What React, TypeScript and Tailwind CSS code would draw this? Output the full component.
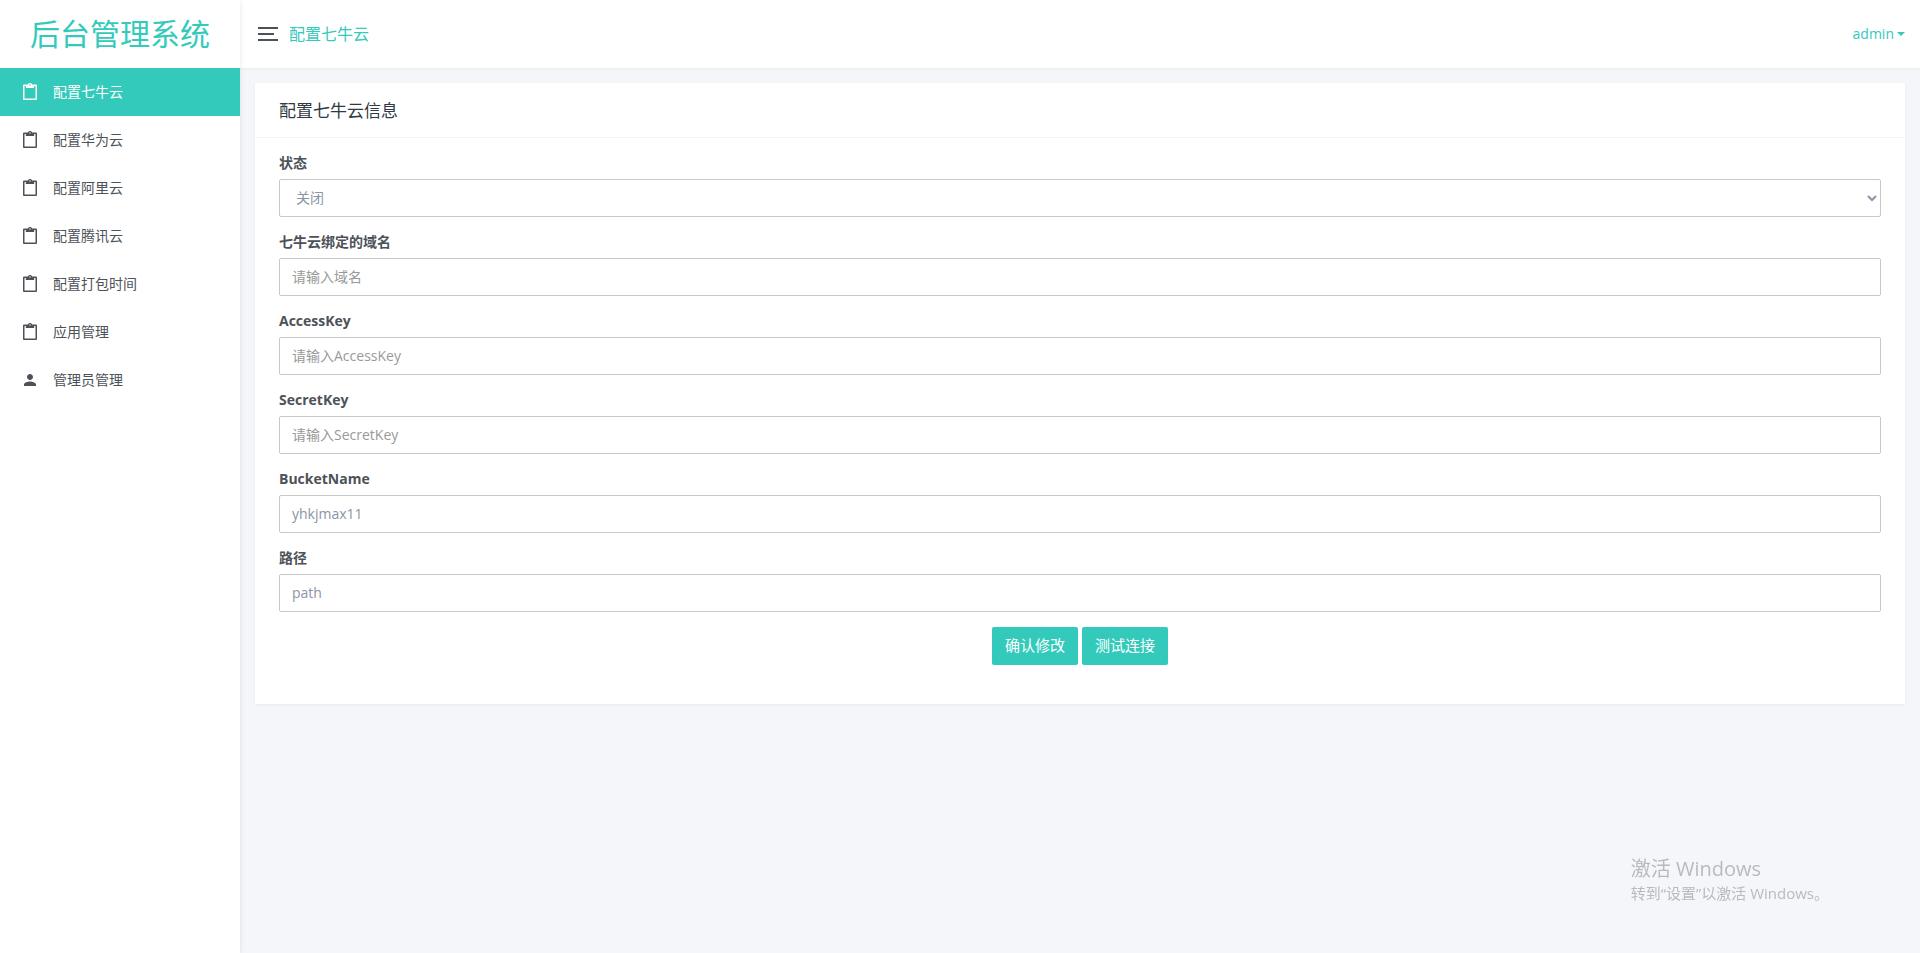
import { useState } from "react";
import type { ReactNode } from "react";
import { MdPerson } from "react-icons/md";
import clsx from "clsx";

interface NavItem {
  id: string;
  label: string;
  icon: "clipboard" | "account";
}

interface TextField {
  id: string;
  label: string;
  placeholder?: string;
  value?: string;
}

const NAV_ITEMS: NavItem[] = [
  { id: "qiniu", label: "配置七牛云", icon: "clipboard" },
  { id: "huawei", label: "配置华为云", icon: "clipboard" },
  { id: "aliyun", label: "配置阿里云", icon: "clipboard" },
  { id: "tencent", label: "配置腾讯云", icon: "clipboard" },
  { id: "package", label: "配置打包时间", icon: "clipboard" },
  { id: "apps", label: "应用管理", icon: "clipboard" },
  { id: "admins", label: "管理员管理", icon: "account" },
];

const TEXT_FIELDS: TextField[] = [
  { id: "domain", label: "七牛云绑定的域名", placeholder: "请输入域名" },
  { id: "accessKey", label: "AccessKey", placeholder: "请输入AccessKey" },
  { id: "secretKey", label: "SecretKey", placeholder: "请输入SecretKey" },
  { id: "bucketName", label: "BucketName", value: "yhkjmax11" },
  { id: "path", label: "路径", value: "path" },
];

const controlClass =
  "block h-[38px] w-full rounded-xs border border-[#c8c8c8] bg-white px-3 pb-0.5 text-sm text-[#8b95a5] outline-none placeholder:text-[#999] focus:border-[#33cabb]";

function ClipboardIcon() {
  return (
    <svg viewBox="0 0 14 18" className="h-[18px] w-3.5 fill-current">
      <path
        fillRule="evenodd"
        d="M1 1.6h3.8a2.3 2.3 0 0 1 4.4 0H13a1 1 0 0 1 1 1V16a1 1 0 0 1-1 1H1a1 1 0 0 1-1-1V2.600a1 1 0 0 1 1-1zM1.500 3v12.500h11V3h-1.300v2H2.800V3zM7 1.200A.7.7 0 1 0 7 2.600a.7.7 0 0 0 0-1.400z"
      />
    </svg>
  );
}

function Sidebar() {
  return (
    <aside className="z-20 w-60 shrink-0 bg-white shadow-[0_1px_5px_rgba(0,0,0,0.1)]">
      <div className="flex h-[68px] items-center justify-center">
        <a href="#" className="text-3xl text-[#33cabb]">
          后台管理系统
        </a>
      </div>
      <nav>
        <ul>
          {NAV_ITEMS.map((item, i) => (
            <li key={item.id}>
              <a
                href={`#${item.id}`}
                className={clsx(
                  "flex h-12 items-center gap-[13px] pl-5 text-sm",
                  i === 0 ? "bg-[#33cabb] text-white" : "text-[#4d5259] hover:bg-black/5"
                )}
              >
                <span className="flex w-5 justify-center">
                  {item.icon === "account" ? <MdPerson className="size-[18px]" /> : <ClipboardIcon />}
                </span>
                {item.label}
              </a>
            </li>
          ))}
        </ul>
      </nav>
    </aside>
  );
}

function Header() {
  return (
    <header className="z-10 flex h-[68px] items-center bg-white pr-[15px] pl-[18px] text-[#33cabb] shadow-[0_1px_3px_rgba(0,0,0,0.05)]">
      <button type="button" aria-label="切换侧边栏" className="flex flex-col gap-1">
        <span className="h-0.5 w-5 bg-[#4d5259]" />
        <span className="h-0.5 w-4 bg-[#4d5259]" />
        <span className="h-0.5 w-5 bg-[#4d5259]" />
      </button>
      <span className="ml-[11px] text-base">配置七牛云</span>
      <button type="button" className="ml-auto flex items-center gap-[3px] text-sm">
        admin
        <svg viewBox="0 0 8 4" className="h-1 w-2 fill-current">
          <path d="M0 0h8L4 4z" />
        </svg>
      </button>
    </header>
  );
}

function FormGroup({ id, label, children }: { id: string; label: string; children: ReactNode }) {
  return (
    <div className="mb-[15px]">
      <label htmlFor={id} className="mb-[7px] block text-sm leading-[19px] font-bold">
        {label}
      </label>
      {children}
    </div>
  );
}

function ActionButton({ type = "button", children }: { type?: "button" | "submit"; children: ReactNode }) {
  return (
    <button
      type={type}
      className="h-[38px] rounded-xs bg-[#33cabb] px-[13px] pb-0.5 text-[15px] text-white hover:bg-[#52d3c7]"
    >
      {children}
    </button>
  );
}

export default function App() {
  const [status, setStatus] = useState("off");

  return (
    <div className="flex min-h-screen bg-[#f5f6fa] font-['Open_Sans','Noto_Sans_CJK_SC',sans-serif] text-[#4d5259]">
      <Sidebar />
      <div className="flex min-w-0 flex-1 flex-col">
        <Header />
        <main className="p-[15px]">
          <section className="bg-white shadow-[0_1px_3px_rgba(0,0,0,0.05)]">
            <h4 className="flex h-[55px] items-center border-b border-[#f3f3f5] px-6 pt-0.5 text-[17px] text-[#313944]">
              配置七牛云信息
            </h4>
            <form className="px-6 pt-[15px] pb-6" onSubmit={(e) => e.preventDefault()}>
              <FormGroup id="status" label="状态">
                <select
                  id="status"
                  className={controlClass}
                  value={status}
                  onChange={(e) => setStatus(e.target.value)}
                >
                  <option value="off">关闭</option>
                  <option value="on">开启</option>
                </select>
              </FormGroup>
              {TEXT_FIELDS.map((field) => (
                <FormGroup key={field.id} id={field.id} label={field.label}>
                  <input
                    id={field.id}
                    type="text"
                    className={controlClass}
                    placeholder={field.placeholder}
                    defaultValue={field.value}
                  />
                </FormGroup>
              ))}
              <div className="mb-[15px] flex justify-center gap-1">
                <ActionButton type="submit">确认修改</ActionButton>
                <ActionButton>测试连接</ActionButton>
              </div>
            </form>
          </section>
        </main>
      </div>

      {/* Activation watermark */}
      <div className="pointer-events-none fixed right-[91px] bottom-12 z-30 text-[#b9babd]">
        <p className="text-xl leading-6">激活 Windows</p>
        <p className="text-[15px] leading-6">转到“设置”以激活 Windows。</p>
      </div>
    </div>
  );
}
